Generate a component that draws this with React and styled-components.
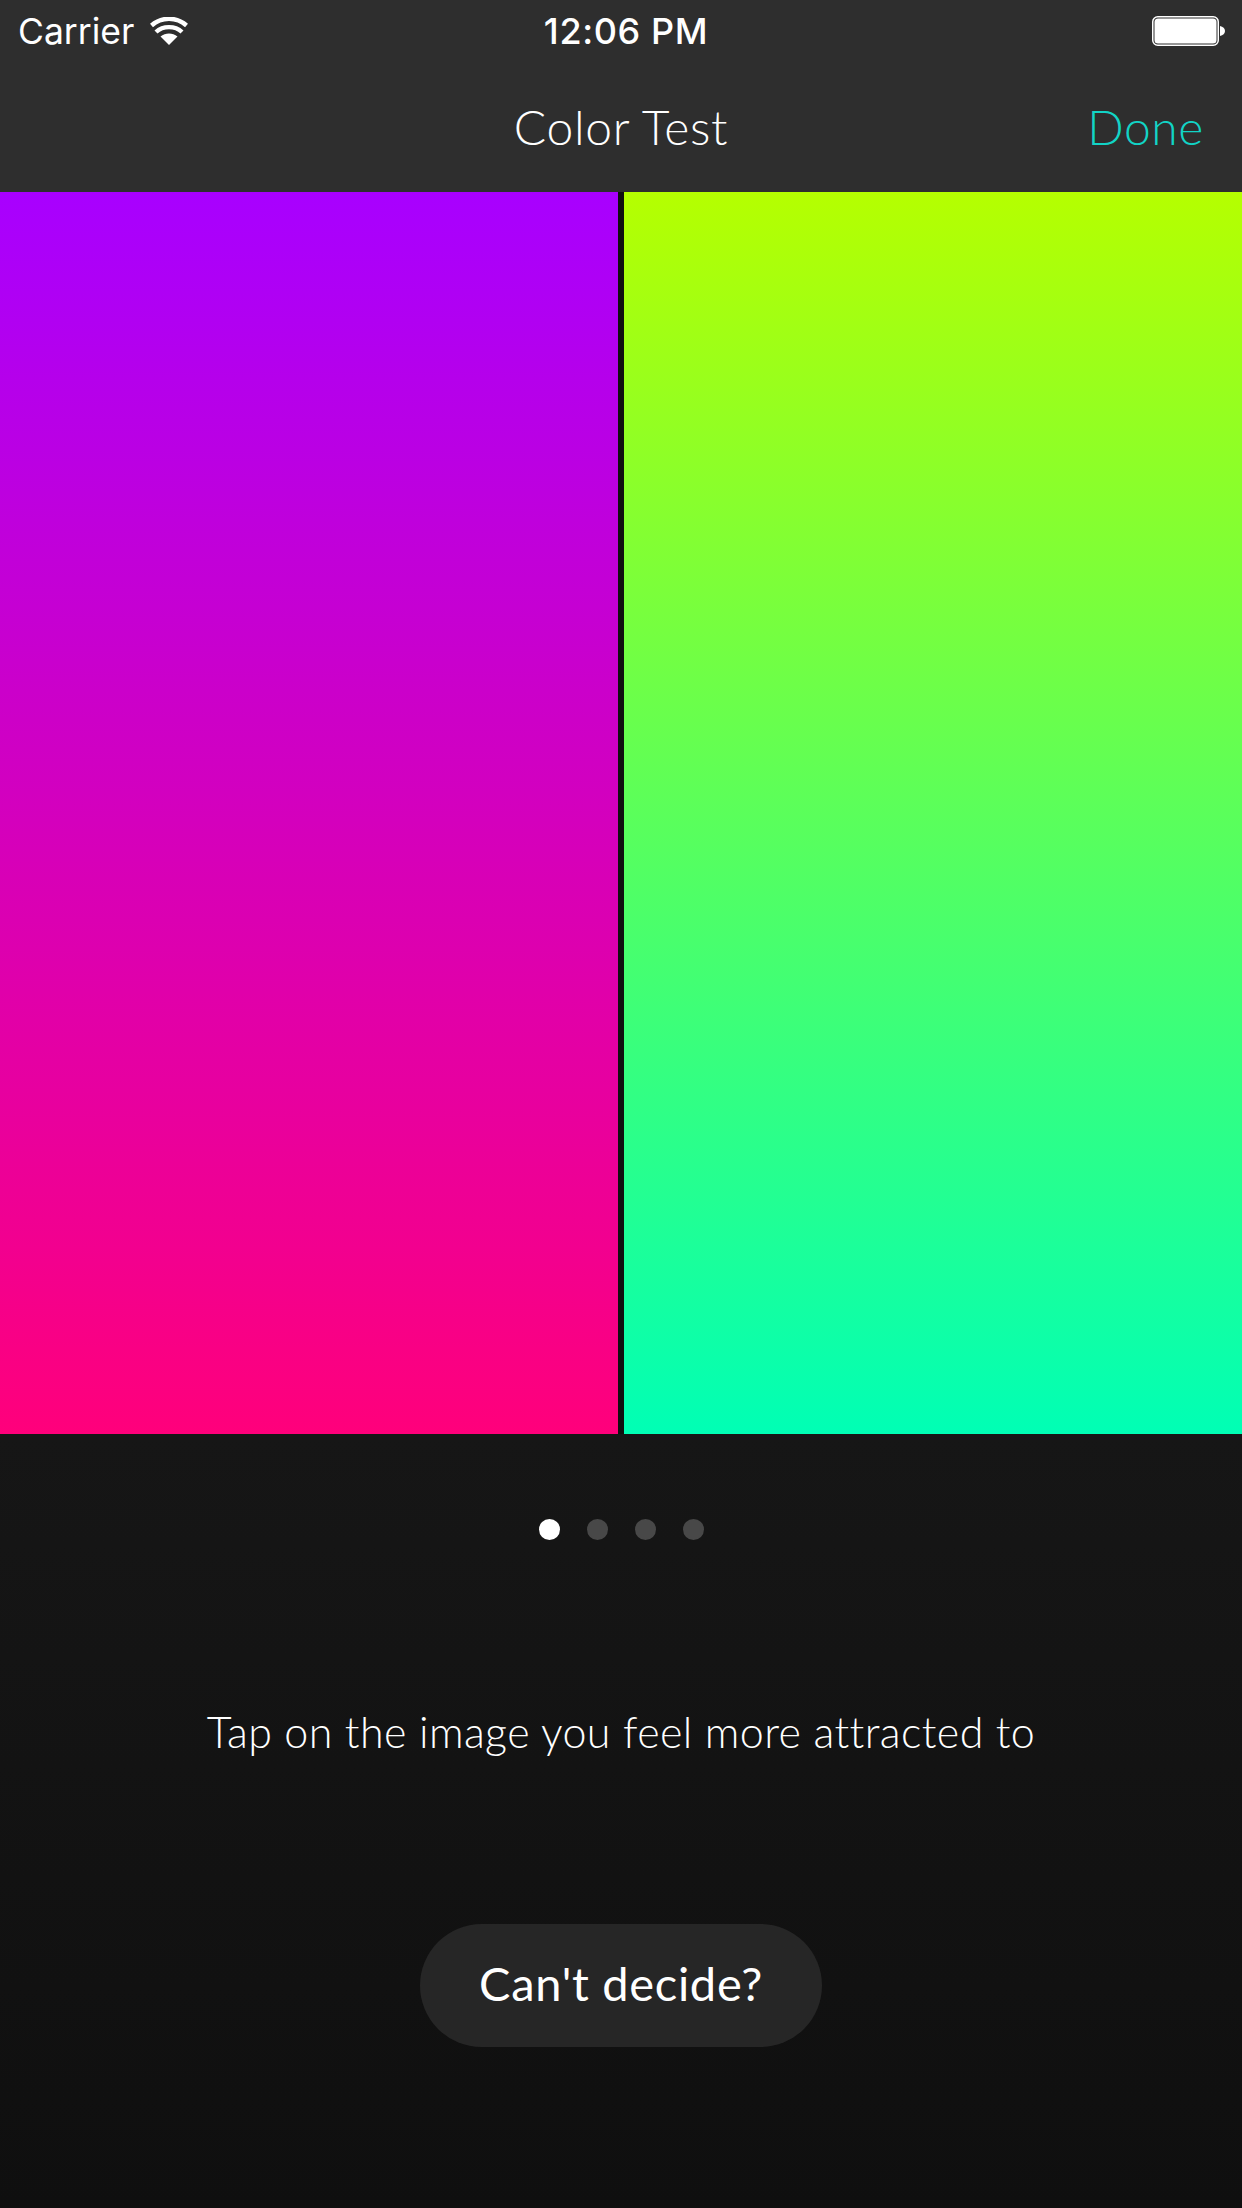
import React from 'react';
import styled, { createGlobalStyle } from 'styled-components';

const Global = createGlobalStyle`
  html, body {
    margin: 0;
    padding: 0;
    background: #101010;
  }
`;

const Screen = styled.div`
  width: 1242px;
  height: 2208px;
  display: flex;
  flex-direction: column;
  overflow: hidden;
  font-family: 'Lato', sans-serif;
  color: #fff;
`;

const Header = styled.header`
  height: 192px;
  display: flex;
  flex-direction: column;
  background: #2e2e2e;
`;

const StatusBar = styled.div`
  height: 62px;
  padding: 0 16px 0 18px;
  display: flex;
  align-items: center;
  justify-content: space-between;
  font-family: 'Inter', sans-serif;
  font-size: 35.5px;
`;

const StatusLeft = styled.div`
  flex: 1;
  display: flex;
  align-items: center;
  gap: 16px;
`;

const StatusRight = styled.div`
  flex: 1;
  display: flex;
  justify-content: flex-end;
`;

const Clock = styled.div`
  margin-left: 8px;
  font-size: 36px;
  font-weight: 500;
  letter-spacing: 0.6px;
`;

const NavBar = styled.div`
  flex: 1;
  padding: 0 38px 2px 38px;
  display: grid;
  grid-template-columns: 1fr auto 1fr;
  align-items: center;
  font-size: 48px;
  font-weight: 300;
`;

const Title = styled.div`
  grid-column: 2;
  letter-spacing: 0.7px;
`;

const Done = styled.div`
  justify-self: end;
  letter-spacing: 0.6px;
  color: #12d4c6;
`;

const Panels = styled.div`
  height: 1242px;
  display: grid;
  grid-template-columns: 618px 618px;
  gap: 6px;
`;

const Panel = styled.div`
  background: linear-gradient(${props => props.$from}, ${props => props.$to});
`;

const Footer = styled.div`
  flex: 1;
  display: flex;
  flex-direction: column;
  background: linear-gradient(#161616, #0f0f0f);
`;

const Pager = styled.div`
  margin-top: 85px;
  display: flex;
  justify-content: center;
  gap: 27px;
`;

const Dot = styled.span`
  width: 21px;
  height: 21px;
  border-radius: 50%;
  background: ${props => (props.$active ? '#fff' : '#484848')};
`;

const Prompt = styled.p`
  margin: 162px 0 0;
  text-align: center;
  font-size: 43px;
  font-weight: 300;
  line-height: 60px;
  letter-spacing: 0.4px;
`;

const Decide = styled.button`
  align-self: center;
  margin-top: 162px;
  width: 402px;
  height: 123px;
  padding: 0 0 5px;
  border: 0;
  border-radius: 62px;
  background: #262626;
  color: #fff;
  font-family: 'Lato', sans-serif;
  font-size: 47px;
  font-weight: 400;
  letter-spacing: 0.7px;
`;

const Wifi = () => (
  <svg width="38" height="28" viewBox="0 0 38 28">
    <path d="M19 28 L10.5 19.5 C15.5 15.5 22.5 15.5 27.5 19.5 Z" fill="#fff" />
    <path d="M6 15 C13 8.5 25 8.5 32 15" fill="none" stroke="#fff" strokeWidth="4.4" />
    <path d="M1.5 8.5 C11.500 -0.500 26.500 -0.500 36.500 8.500" fill="none" stroke="#fff" strokeWidth="4.4" />
  </svg>
);

const Battery = () => (
  <svg width="74" height="30" viewBox="0 0 74 30">
    <rect x="0.750" y="0.750" width="65.500" height="28.500" rx="5" fill="#2e2e2e" stroke="#fff" strokeWidth="1.500" />
    <rect x="2.500" y="2.500" width="62" height="25" rx="3.500" fill="#fff" />
    <path d="M68 10 C71 10.500 73 12.500 73 15 C73 17.500 71 19.500 68 20 Z" fill="#fff" />
  </svg>
);

export default function App() {
  return (
    <Screen>
      <Global />
      <Header>
        <StatusBar>
          <StatusLeft>
            Carrier
            <Wifi />
          </StatusLeft>
          <Clock>12:06 PM</Clock>
          <StatusRight>
            <Battery />
          </StatusRight>
        </StatusBar>
        <NavBar>
          <Title>Color Test</Title>
          <Done>Done</Done>
        </NavBar>
      </Header>
      <Panels>
        <Panel $from="#a800ff" $to="#ff007b" />
        <Panel $from="#b5ff00" $to="#00ffb5" />
      </Panels>
      <Footer>
        <Pager>
          <Dot $active />
          <Dot />
          <Dot />
          <Dot />
        </Pager>
        <Prompt>Tap on the image you feel more attracted to</Prompt>
        <Decide>Can't decide?</Decide>
      </Footer>
    </Screen>
  );
}
